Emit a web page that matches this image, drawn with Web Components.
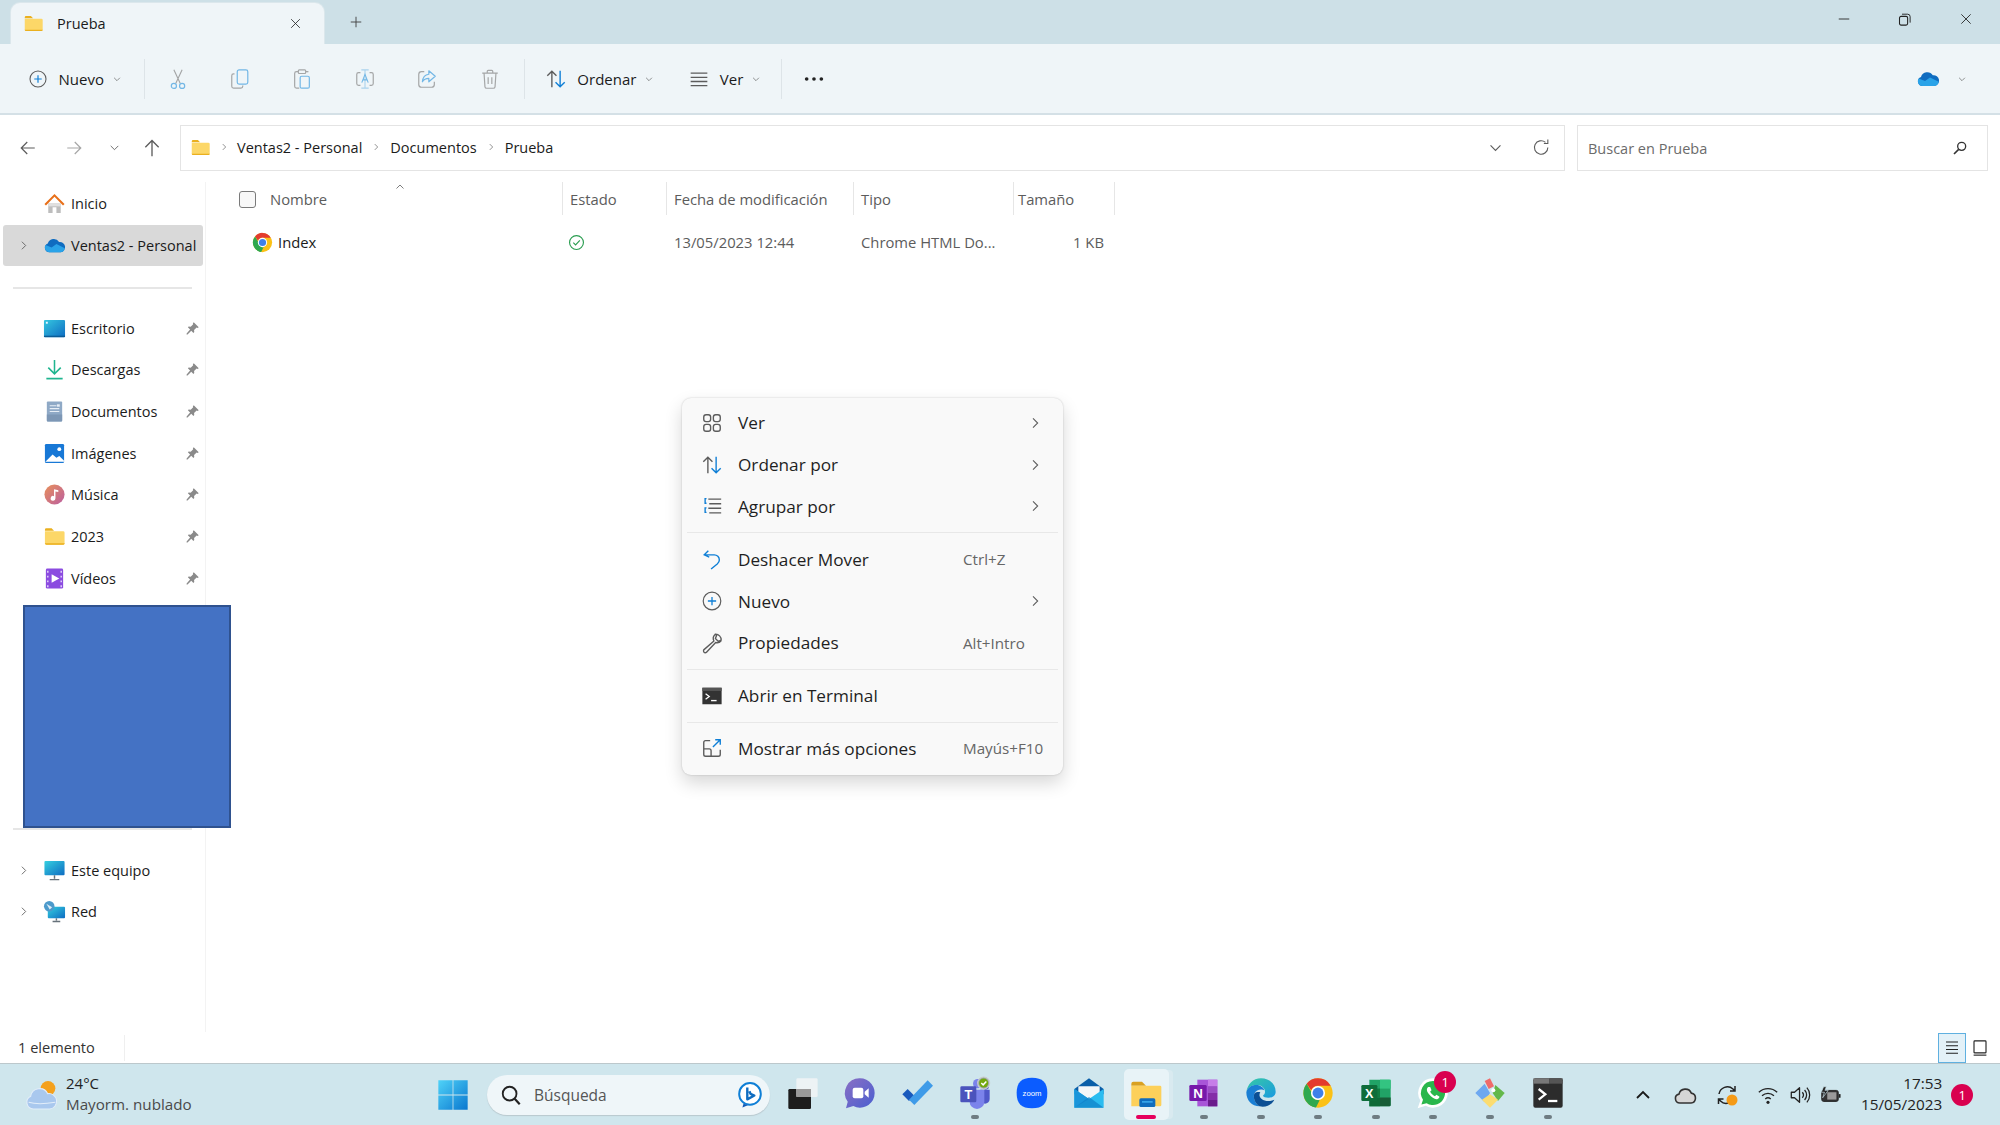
<!DOCTYPE html>
<html lang="es"><head><meta charset="utf-8"><title>Prueba</title>
<style>
html,body{margin:0;padding:0;height:100%;overflow:hidden;background:#fff;font-family:"Open Sans","Noto Sans",sans-serif;color:#1b1b1b}
</style></head><body>
<app-window>
  <win-titlebar></win-titlebar>
  <win-toolbar></win-toolbar>
  <address-row></address-row>
  <main-area>
    <nav-pane>
      <nav-item icon="home" style="margin-top:1px">Inicio</nav-item>
      <nav-item icon="onedrive" chevron selected>Ventas2 - Personal</nav-item>
      <nav-sep></nav-sep>
      <nav-item icon="desktop" pin>Escritorio</nav-item>
      <nav-item icon="download" pin>Descargas</nav-item>
      <nav-item icon="docs" pin>Documentos</nav-item>
      <nav-item icon="pictures" pin>Imágenes</nav-item>
      <nav-item icon="music" pin>Música</nav-item>
      <nav-item icon="folder" pin>2023</nav-item>
      <nav-item icon="videos" pin>Vídeos</nav-item>
      <nav-sep style="margin-top:229px;margin-bottom:19px"></nav-sep>
      <nav-item icon="pc" chevron>Este equipo</nav-item>
      <nav-item icon="network" chevron>Red</nav-item>
    </nav-pane>
    <file-list></file-list>
  </main-area>
  <status-bar></status-bar>
  <task-bar></task-bar>
  <redaction-box></redaction-box>
  <context-menu>
    <menu-item icon="grid" arrow>Ver</menu-item>
    <menu-item icon="sort" arrow>Ordenar por</menu-item>
    <menu-item icon="group" arrow>Agrupar por</menu-item>
    <menu-sep></menu-sep>
    <menu-item icon="undo" shortcut="Ctrl+Z">Deshacer Mover</menu-item>
    <menu-item icon="plus" arrow>Nuevo</menu-item>
    <menu-item icon="wrench" shortcut="Alt+Intro">Propiedades</menu-item>
    <menu-sep></menu-sep>
    <menu-item icon="term">Abrir en Terminal</menu-item>
    <menu-sep></menu-sep>
    <menu-item icon="more" shortcut="Mayús+F10">Mostrar más opciones</menu-item>
  </context-menu>
</app-window>
<script>
const G='#5c5c5c',B='#0f7fd6';
const ICONS={
plus:`<circle cx="12" cy="12" r="9.6" fill="none" stroke="${G}" stroke-width="1.3"/><path d="M12 7.5v9M7.5 12h9" stroke="${B}" stroke-width="1.4"/>`,
cut:`<path d="M7.5 2l7 15M16.5 2l-7 15" stroke="#8a8a8a" stroke-width="1.2" fill="none"/><circle cx="7.5" cy="19.5" r="2.8" fill="none" stroke="#4aa3e0" stroke-width="1.3"/><circle cx="16.5" cy="19.5" r="2.8" fill="none" stroke="#4aa3e0" stroke-width="1.3"/>`,
copy:`<path d="M6 6.5H5a2 2 0 0 0-2 2V20a2 2 0 0 0 2 2h8a2 2 0 0 0 2-2v-1" fill="none" stroke="#8c8c8c" stroke-width="1.3"/><rect x="9" y="2" width="11.5" height="15.5" rx="2" fill="none" stroke="#4aa3e0" stroke-width="1.3"/>`,
paste:`<path d="M8 4H6a2 2 0 0 0-2 2v14a2 2 0 0 0 2 2h3" fill="none" stroke="#8c8c8c" stroke-width="1.3"/><path d="M16 4h2a2 2 0 0 1 1 .4" fill="none" stroke="#8c8c8c" stroke-width="1.3"/><rect x="8" y="2" width="8" height="4" rx="1" fill="none" stroke="#8c8c8c" stroke-width="1.3"/><rect x="10" y="9" width="10" height="13" rx="1.6" fill="none" stroke="#4aa3e0" stroke-width="1.3"/>`,
rename:`<path d="M7 5H5a2 2 0 0 0-2 2v10a2 2 0 0 0 2 2h2M17 5h2a2 2 0 0 1 2 2v10a2 2 0 0 1-2 2h-2" fill="none" stroke="#8c8c8c" stroke-width="1.3"/><path d="M8 2h8M8 22h8M12 2v20" stroke="#4aa3e0" stroke-width="1.2" fill="none" opacity=".55"/><path d="M8.5 16L12 7l3.5 9M9.7 13h4.6" stroke="#4aa3e0" stroke-width="1.2" fill="none"/>`,
share:`<path d="M9 4H6a3 3 0 0 0-3 3v11a3 3 0 0 0 3 3h11a3 3 0 0 0 3-3v-3" fill="none" stroke="#8c8c8c" stroke-width="1.3"/><path d="M14 3l7 6-7 6v-3.6c-3.5 0-5.6 1.2-7 3.6 .4-4.6 2.8-7.8 7-8.2z" fill="none" stroke="#4aa3e0" stroke-width="1.3" stroke-linejoin="round"/>`,
trash:`<path d="M3.5 5.5h17M9 5.5V3.5a1 1 0 0 1 1-1h4a1 1 0 0 1 1 1v2M5.5 5.5l1 15a2 2 0 0 0 2 1.6h7a2 2 0 0 0 2-1.6l1-15M10 10v7.5M14 10v7.5" fill="none" stroke="#8c8c8c" stroke-width="1.3"/>`,
sort:`<path d="M7.5 21V3.5M2.5 8.5l5-5 5 5" fill="none" stroke="${G}" stroke-width="1.5"/><path d="M16.5 3v17.5M11.5 15.5l5 5 5-5" fill="none" stroke="${B}" stroke-width="1.5"/>`,
lines:`<path d="M2 5h20M2 10h20M2 15h20M2 20h20" stroke="${G}" stroke-width="1.6"/>`,
dots:`<circle cx="4" cy="12" r="2" fill="#222"/><circle cx="12" cy="12" r="2" fill="#222"/><circle cx="20" cy="12" r="2" fill="#222"/>`,
chevD:`<path d="M5 9l7 7 7-7" fill="none" stroke="${G}" stroke-width="1.6"/>`,
chevR:`<path d="M9 5l7 7-7 7" fill="none" stroke="${G}" stroke-width="1.6"/>`,
chevU:`<path d="M5 15l7-7 7 7" fill="none" stroke="${G}" stroke-width="1.6"/>`,
chevUd:`<path d="M4 16l8-8 8 8" fill="none" stroke="#1a1a1a" stroke-width="2.4"/>`,
back:`<path d="M21 12H3M11 4l-8 8 8 8" fill="none" stroke="${G}" stroke-width="1.6"/>`,
fwd:`<path d="M3 12h18M13 4l8 8-8 8" fill="none" stroke="#a6a6a6" stroke-width="1.6"/>`,
up:`<path d="M12 22V3M4 11l8-8 8 8" fill="none" stroke="${G}" stroke-width="1.6"/>`,
refresh:`<path d="M20 12a8.500 8.500 0 1 1-3-6.500M20 2v5h-5" fill="none" stroke="${G}" stroke-width="1.4"/>`,
search:`<circle cx="14.5" cy="9.5" r="6" fill="none" stroke="#333" stroke-width="2"/><path d="M10 14l-7 7" stroke="#333" stroke-width="2.4"/>`,
x:`<path d="M4 4l16 16M20 4L4 20" stroke="#222" stroke-width="1.5"/>`,
add:`<path d="M12 3v18M3 12h18" stroke="#444" stroke-width="1.6"/>`,
min:`<path d="M3 12h18" stroke="#222" stroke-width="1.5"/>`,
restore:`<rect x="4" y="7" width="13" height="14" rx="2.5" fill="none" stroke="#222" stroke-width="1.7"/><path d="M8 3.5h9a4 4 0 0 1 4 4V17" fill="none" stroke="#222" stroke-width="1.5"/>`,
folder:`<path d="M2 5a1.5 1.5 0 0 1 1.5-1.5h5.5L11.5 6H2z" fill="#eab01f"/><path d="M2 6.5h19a1.5 1.5 0 0 1 1.5 1.5v11a1.5 1.5 0 0 1-1.5 1.5H3.5A1.5 1.5 0 0 1 2 19z" fill="#fcd768"/><path d="M2 19h20.5v.5a1.5 1.5 0 0 1-1.5 1H3.5A1.5 1.5 0 0 1 2 19z" fill="#eab01f"/>`,
home:`<path d="M5.5 12h13v10h-4.5v-6h-4v6H5.500z" fill="#bdbdbd"/><path d="M5.500 12h13v3h-13z" fill="#e0e0e0"/><path d="M12 2L1.500 12.500l1.600 1.500L12 5l8.900 9 1.600-1.500z" fill="#e8701a"/>`,
onedrive:`<path d="M6.500 19A4.700 4.700 0 0 1 5 9.900 6.500 6.500 0 0 1 16.800 8.300 5.400 5.400 0 0 1 18.500 19z" fill="#0f6cc0"/><path d="M6.500 19a4.700 4.700 0 0 1-3.800-7.400L9 14l5-3.500 8.700 4.300A5 5 0 0 1 18.500 19z" fill="#2aa3e8"/>`,
desktop:`<rect x="1" y="3" width="22" height="18" rx="1.200" fill="url(#g1)"/><rect x="1" y="19.500" width="22" height="1.500" fill="#0b5c96"/><rect x="3" y="5" width="2" height="2" fill="#e8f8ff"/><defs><linearGradient id="g1" x1="0" y1="0" x2="1" y2="1"><stop offset="0" stop-color="#35c7e0"/><stop offset="1" stop-color="#0e6cc2"/></linearGradient></defs>`,
download:`<path d="M12 2v14M5.500 10l6.500 6.500 6.500-6.500" fill="none" stroke="#1fb58f" stroke-width="1.600"/><path d="M3.500 21.500h17" stroke="#1fb58f" stroke-width="1.800"/>`,
docs:`<rect x="4" y="1.500" width="16" height="21" rx="1" fill="#8fa9c6"/><path d="M4 15h16v6.500a1 1 0 0 1-1 1H5a1 1 0 0 1-1-1z" fill="#7d97b5"/><path d="M7 6h7M7 9h10M7 12h10" stroke="#e7eef6" stroke-width="1.200"/><rect x="14.500" y="4.500" width="3" height="2.500" fill="#e7eef6"/>`,
pictures:`<rect x="2" y="2" width="20" height="20" rx="1.500" fill="#1878d6"/><path d="M2 21l8-8 4 3.500 3-2 5 5v1H2z" fill="#fff"/><circle cx="17" cy="7.500" r="2" fill="#fff"/>`,
music:`<defs><linearGradient id="g2" x1="0" y1="0" x2="1" y2="1"><stop offset="0" stop-color="#e8905a"/><stop offset="1" stop-color="#bb5ea0"/></linearGradient></defs><circle cx="12" cy="12" r="10.500" fill="url(#g2)"/><path d="M11.500 6.500l4.500 1v2l-3-.6V16a2.500 2.500 0 1 1-1.500-2.300z" fill="#fff"/>`,
videos:`<rect x="3" y="1.500" width="18" height="21" rx="1.500" fill="#8b4be0"/><path d="M9 7.500l8 4.500-8 4.500z" fill="#fff"/><path d="M5 4v2M5 9v2M5 14v2M5 19v2M19 4v2M19 9v2M19 14v2M19 19v2" stroke="#e4d4fa" stroke-width="1.500"/>`,
pc:`<defs><linearGradient id="g3" x1="0" y1="0" x2="1" y2="1"><stop offset="0" stop-color="#35d0e0"/><stop offset="1" stop-color="#0e6cc2"/></linearGradient></defs><rect x="1.500" y="2" width="21" height="15" rx="1" fill="url(#g3)"/><path d="M12 17v3.500M7 21.500h10" stroke="#66717a" stroke-width="1.500"/>`,
network:`<defs><linearGradient id="g4" x1="0" y1="0" x2="1" y2="1"><stop offset="0" stop-color="#35d0e0"/><stop offset="1" stop-color="#0e6cc2"/></linearGradient></defs><rect x="5" y="7" width="18" height="12" rx="1" fill="url(#g4)"/><path d="M14 19v2.500M10 22.500h8" stroke="#66717a" stroke-width="1.500"/><circle cx="6.500" cy="6.500" r="5.500" fill="#4d9acb"/><path d="M3.500 4l6 3.500L7 10z" fill="#dcecf6"/>`,
pin:`<path d="M14 2l8 8-2 1-1.500-.5-4 4 .3 3.200-1.300 1.300-3.500-3.500L4 21.500l-1.500.1.100-1.500 5.500-6.500L4.600 10.100 5.900 8.800l3.200.3 4-4L12.600 3.500z" fill="#8a8a8a"/>`,
chrome:`<circle cx="12" cy="12" r="11" fill="#fbc116"/><path d="M12 1a11 11 0 0 1 9.500 5.500H12a5.500 5.500 0 0 0-5.100 3.500L3.500 5A11 11 0 0 1 12 1z" fill="#e33b2e"/><path d="M3.500 5l5 8.900 1.700 1.700-.2 7.200A11 11 0 0 1 3.500 5z" fill="#2fa84f"/><path d="M8 15l2.300 2 2.900.4-2.700 5.500a11 11 0 0 1-4.800-2z" fill="#2fa84f"/><circle cx="12" cy="12" r="5.300" fill="#fff"/><circle cx="12" cy="12" r="4.100" fill="#3f80ea"/>`,
ok:`<circle cx="12" cy="12" r="9.800" fill="none" stroke="#2a9d50" stroke-width="1.600"/><path d="M7.500 12.300l3.200 3.200 6-6.500" fill="none" stroke="#2a9d50" stroke-width="1.600"/>`,
grid:`<g fill="none" stroke="${G}" stroke-width="1.500"><rect x="3" y="3" width="7.500" height="7.500" rx="2.500"/><rect x="13.500" y="3" width="7.500" height="7.500" rx="2.500"/><rect x="3" y="13.500" width="7.500" height="7.500" rx="2.500"/><rect x="13.500" y="13.500" width="7.500" height="7.500" rx="2.500"/></g>`,
group:`<path d="M6 4H4.500v5H6M6 14H4.500v5H6" fill="none" stroke="${B}" stroke-width="1.500"/><path d="M8 4.500h14M9 9.500h13M8 14.500h14M9 19.500h13" stroke="${G}" stroke-width="1.500"/>`,
undo:`<path d="M8 3L3.500 7.500 9 10M3.500 7.500h11a5.500 5.500 0 0 1 5.500 5.500c0 2-1 3.300-2.300 4.500L11 23" fill="none" stroke="${B}" stroke-width="1.500"/>`,
wrench:`<path d="M15.500 2.500a6 6 0 0 1 6.500 6.500l-3.300 1.200-3-3 1.300-3.500zM15 3a6 6 0 0 0-.9 6.800L3 19.500a2.200 2.200 0 0 0 1.500 3.200 2.200 2.200 0 0 0 1.500-.7L16 11.500a6 6 0 0 0 6-2" fill="none" stroke="${G}" stroke-width="1.500" stroke-linejoin="round"/>`,
term:`<rect x="1.500" y="3" width="21" height="18" fill="#333"/><rect x="1.500" y="3" width="21" height="3.500" fill="#555"/><path d="M5 9.500l4 3-4 3" fill="none" stroke="#fff" stroke-width="1.400"/><path d="M11 17h6" stroke="#fff" stroke-width="1.500"/>`,
more:`<path d="M10 4H5a2 2 0 0 0-2 2v13a2 2 0 0 0 2 2h14a2 2 0 0 0 2-2v-5M3 13h6a2 2 0 0 1 2 2v6" fill="none" stroke="${G}" stroke-width="1.500"/><path d="M13 11l8-8M15.500 3H21v5.500" fill="none" stroke="${B}" stroke-width="1.500"/>`,
list:`<path d="M4 4h16M4 9h16M4 14h16M4 19h16" stroke="#222" stroke-width="1.500"/>`,
tile:`<rect x="4" y="2.500" width="16" height="16" rx="1" fill="none" stroke="#222" stroke-width="1.500"/><path d="M3.500 21.500h17" stroke="#222" stroke-width="1.500"/>`,
weather:`<circle cx="16.500" cy="7" r="5.500" fill="#f4a11e"/><path d="M5.500 22.500a5 5 0 0 1-2-9.500 6.800 6.800 0 0 1 12.800-2A5.800 5.800 0 0 1 18 22.500z" fill="#a9c8ee" stroke="#e2edf9" stroke-width=".8"/><path d="M2 17.500c5 1.500 11 1.500 20 0" fill="none" stroke="#e2edf9" stroke-width=".8"/>`,
start:`<defs><linearGradient id="s" x1="0" y1="0" x2="1" y2="1"><stop offset="0" stop-color="#4fd2f8"/><stop offset="1" stop-color="#0a77cf"/></linearGradient></defs><path d="M1 1h10.700v10.700H1zM12.300 1H23v10.700H12.300zM1 12.300h10.700V23H1zM12.300 12.300H23V23H12.300z" fill="url(#s)"/>`,
loupe:`<circle cx="10.500" cy="10.500" r="7.500" fill="none" stroke="#222" stroke-width="2"/><path d="M16 16l5.500 6" stroke="#222" stroke-width="2.400"/>`,
bing:`<circle cx="12" cy="11" r="10" fill="#fff" stroke="#0f7fd6" stroke-width="1.800"/><path d="M6 20l-1 3.500 5-2" fill="#1259b5"/><path d="M9.500 5v11l6.500-3.500-3.500-1.500-1-2.500" fill="none" stroke="#0f6cc0" stroke-width="2.200" stroke-linejoin="round"/>`,
squares:`<rect x="1" y="9" width="17" height="15" rx="1" fill="#1d1d1d"/><rect x="7" y="1" width="16" height="14" rx="1" fill="#f2f5f6" opacity=".85"/><rect x="7" y="9" width="11" height="6" fill="#9a9a9a"/>`,
meet:`<defs><linearGradient id="m" x1="0" y1="0" x2="1" y2="1"><stop offset="0" stop-color="#8a6fc4"/><stop offset="1" stop-color="#4a5fd0"/></linearGradient></defs><path d="M12 1a11 11 0 1 1-5 20.800L1.500 23.500l1.300-5A11 11 0 0 1 12 1z" fill="url(#m)"/><rect x="6.500" y="8" width="8" height="8" rx="1.500" fill="#fff"/><path d="M15.500 11l3-2.500v7l-3-2.500z" fill="#fff"/>`,
todo:`<path d="M1 13l4-4 5 5-4 4z" fill="#195abd"/><path d="M6 18L20 3.500l4 4L10 22z" fill="#3f9be8" transform="translate(0 -1)"/>`,
teams:`<circle cx="14" cy="5" r="3.500" fill="#7b83eb"/><circle cx="20" cy="7" r="2.500" fill="#5059c9"/><path d="M16 9.500h7v7a3.500 3.500 0 0 1-4 3.500z" fill="#5059c9"/><path d="M8 9.500h11v9a5.500 5.500 0 0 1-11 0z" fill="#7b83eb"/><rect x="1" y="7" width="12" height="12" rx="1" fill="#4b53bc"/><text x="7" y="16.500" font-family="Liberation Sans" font-weight="700" font-size="9.500" fill="#fff" text-anchor="middle">T</text><circle cx="18.500" cy="4.500" r="4.500" fill="#9aa" stroke="#ccc" stroke-width=".8"/><circle cx="18.500" cy="4.500" r="3.400" fill="#74a80e"/><path d="M16.700 4.500l1.400 1.400 2.400-2.600" fill="none" stroke="#fff" stroke-width="1.100"/>`,
zoom:`<path d="M12 .500C20 .500 23.500 4 23.500 12S20 23.500 12 23.500.5 20 .5 12 4 .5 12 .5z" fill="#0b5cff"/><text x="12" y="14" font-family="Liberation Sans" font-size="5.800" fill="#fff" text-anchor="middle">zoom</text>`,
mail:`<path d="M1 9l11-8 11 8v4H1z" fill="#0a5ea8"/><path d="M4 7h16v8l-8 4-8-4z" fill="#f3f6f8"/><path d="M1 9l11 7.500L23 9v14H1z" fill="#2bbcf0"/><path d="M1 23V9l11 7.500z" fill="#1a95da"/><path d="M1 23h22l-11-8z" fill="#0f7fc6" opacity=".7"/>`,
explorer:`<path d="M1 5a1.500 1.500 0 0 1 1.500-1.500H9l3 3H1z" fill="#d9a021"/><path d="M1 6.500h21.500a1 1 0 0 1 1 1V21a1 1 0 0 1-1 1H1z" fill="#fdd05a"/><rect x="7" y="16" width="12" height="6.500" rx="1.200" fill="#0f6cbd"/><rect x="9" y="18" width="8" height="1.300" fill="#35a3e8"/>`,
onenote:`<path d="M7 2h15v20H7z" fill="#a855d8"/><path d="M15 2h7v5h-7z" fill="#c67de8"/><path d="M15 7h7v5h-7z" fill="#9b4fc4"/><path d="M15 12h7v5h-7z" fill="#842ea8"/><path d="M15 17h7v5h-7z" fill="#6a1b8c"/><rect x="1" y="6" width="13" height="12" rx="1" fill="#7719aa"/><text x="7.500" y="15.600" font-family="Liberation Sans" font-weight="700" font-size="10" fill="#fff" text-anchor="middle">N</text>`,
edge:`<defs><linearGradient id="e" x1="0" y1="0" x2="1" y2="1"><stop offset="0" stop-color="#36c9a6"/><stop offset="1" stop-color="#1a9ae0"/></linearGradient></defs><path d="M12 1c6.500 0 11 4.500 11 10 0 3-2.500 4.500-5.500 4.500-2 0-4-.6-4-1.500 0-.5 1.500-.8 1.500-3 0-2.800-2.800-5-6-5C5 6 1.500 8 1 11.500 1.800 5.500 6 1 12 1z" fill="url(#e)"/><path d="M1 11.500c.5-3.500 4-5.500 7.500-5.500 3 0 5.600 2 5.900 4-1.500-1-6-1-7.400 2.500-1 2.500 0 7 4 9.500C5 22 1 17.500 1 11.500z" fill="#1a7fd4"/><path d="M7 12.500c-1 2.500 0 7 4 9.500 4.500 1 9-1 11-5-3 1.500-7 1.500-9.500-.5-2-1.500-2-3.500-1-5-2-.5-3.800 0-4.500 1z" fill="#0b4f94"/>`,
excel:`<path d="M7 2h15a1 1 0 0 1 1 1v18a1 1 0 0 1-1 1H7z" fill="#21a366"/><path d="M15 2h8v6.700h-8z" fill="#33c481"/><path d="M7 8.700h8v6.600H7z" fill="#107c41"/><path d="M15 15.300h8V21a1 1 0 0 1-1 1h-7z" fill="#185c37"/><path d="M7 15.300h8V22H7z" fill="#0e6a38"/><rect x="1" y="6" width="12" height="12" rx="1" fill="#0e6d3a"/><text x="7" y="15.500" font-family="Liberation Sans" font-weight="700" font-size="9.500" fill="#fff" text-anchor="middle">X</text>`,
whatsapp:`<path d="M12 1a11 11 0 1 1-5.500 20.500L.5 23.500l2-5.800A11 11 0 0 1 12 1z" fill="#fff"/><path d="M12 3a9 9 0 1 1-4.800 16.600L3.300 20.700l1.200-3.700A9 9 0 0 1 12 3z" fill="#29b74c"/><path d="M8.500 7.500c-1.500 1-1.500 3 .5 5.500s4.500 4 6.200 3.600c1.300-.4 1.800-1.500 1.500-2l-2.200-1.200-1 1c-1.300-.3-3.200-2.200-3.600-3.500l1-1-1-2.400z" fill="#fff"/>`,
git:`<path d="M8 3l4-2 3 6-4 2z" fill="#f06a6a"/><path d="M1 12l7-7 4 7-4 7z" fill="#6ea8f0"/><path d="M16 6l7 6-5 6-4-6z" fill="#63b84a"/><path d="M6 17l6-4 6 4-6 6z" fill="#fbdc70"/><circle cx="14.500" cy="10" r="1.500" fill="#fff"/>`,
termapp:`<rect x="1" y="1" width="22" height="22" rx="1.500" fill="#2c2c2c"/><rect x="1" y="1" width="12" height="4" fill="#777"/><rect x="13" y="1" width="10" height="4" fill="#555"/><path d="M5 9l5 4-5 4" fill="none" stroke="#fff" stroke-width="1.700"/><path d="M12 18h7" stroke="#fff" stroke-width="1.700"/>`,
cloud2:`<path d="M7 20a4.500 4.500 0 0 1-1-8.900 6.500 6.500 0 0 1 12.300-1A5 5 0 0 1 18 20z" fill="#d6d6d6" stroke="#333" stroke-width="1.600"/>`,
sync:`<path d="M4 11a8.500 8.500 0 0 1 14-5l2 2M20 3v5h-5M19 14a8 8 0 0 1-13.500 4l-2-2M3.500 21v-5h5" fill="none" stroke="#222" stroke-width="1.500"/><circle cx="17" cy="17" r="5.500" fill="#f59a16"/>`,
wifi:`<path d="M2 9a14.500 14.500 0 0 1 20 0M5.500 12.800a9.500 9.500 0 0 1 13 0M9 16.300a4.500 4.500 0 0 1 6 0" fill="none" stroke="#222" stroke-width="1.500"/><circle cx="12" cy="20" r="1.700" fill="#222"/>`,
vol:`<path d="M2.500 9v6h3.500l5.500 5V4L6 9z" fill="none" stroke="#222" stroke-width="1.400" stroke-linejoin="round"/><path d="M14.500 9a4.500 4.500 0 0 1 0 6M17 6.500a8 8 0 0 1 0 11M19.500 4a12 12 0 0 1 0 16" fill="none" stroke="#222" stroke-width="1.400"/>`,
battery:`<rect x="3" y="7" width="18" height="12" rx="2" fill="#333" stroke="#222"/><rect x="21.500" y="11" width="2" height="4" fill="#222"/><rect x="9" y="9" width="10" height="8" fill="#9a9a9a"/><path d="M5 3L2.500 9H6l-2 6 6-8H6.500L8 3z" fill="#222" stroke="#cfe7ef" stroke-width=".7"/>`
};
function def(name,css,html,extra){
  const t=document.createElement('template');
  t.innerHTML=`<style>${css}</style>${html}`;
  customElements.define(name,class extends HTMLElement{
    constructor(){super();this.attachShadow({mode:'open'}).appendChild(t.content.cloneNode(true));}
    connectedCallback(){if(extra&&!this._d){this._d=1;extra.call(this,this.shadowRoot);}}
  });
}
def('x-icon',':host{display:inline-flex;flex:none;width:20px;height:20px}svg{width:100%;height:100%;display:block;overflow:visible}','<svg viewBox="0 0 24 24"></svg>',function(r){
  r.querySelector('svg').innerHTML=ICONS[this.getAttribute('name')]||'';
  const s=this.getAttribute('size');if(s){this.style.width=s+'px';this.style.height=s+'px';}
});
function setIcon(el,name,size){el.shadowRoot.querySelector('svg').innerHTML=ICONS[name]||'';if(size){el.style.width=el.style.height=size+'px';}}
def('app-window',':host{display:flex;flex-direction:column;position:relative;width:2000px;height:1125px;overflow:hidden}','<slot></slot>');

def('win-titlebar',`:host{display:flex;height:44px;background:#cde0e7;flex:none;align-items:flex-end;font-size:14.500px}
.tab{width:313px;height:41px;margin-left:11px;background:#eff5f8;border-radius:9px 9px 0 0;display:flex;align-items:center;box-shadow:0 0 0 1px #dbe7ec}
.tab x-icon{margin-left:12px}.tab span{margin-left:13px;flex:1}.tab .c{margin-right:22px}
.plus{margin:0 0 15px 25px}.ctl{margin-left:auto;display:flex;align-self:center;align-items:center;margin-bottom:6px}
.ctl x-icon:nth-child(1){margin-right:46px}.ctl x-icon:nth-child(2){margin-right:47px}.ctl x-icon:nth-child(3){margin-right:27px}`,
`<div class="tab"><x-icon name="folder" size="21"></x-icon><span>Prueba</span><x-icon class="c" name="x" size="13"></x-icon></div>
<x-icon class="plus" name="add" size="14"></x-icon>
<div class="ctl"><x-icon name="min" size="14"></x-icon><x-icon name="restore" size="15"></x-icon><x-icon name="x" size="14"></x-icon></div>`);

def('tool-button',`:host{display:flex;align-items:center;flex:none;font-size:15px;color:#1b1b1b}
.i{display:flex}.l{margin-left:10.500px}.c{margin-left:8px;display:flex}`,
`<span class="i"></span><span class="l"><slot></slot></span><span class="c"><x-icon name="chevD" size="10"></x-icon></span>`,function(r){
  const n=this.getAttribute('icon'),sz=this.getAttribute('size')||20;
  r.querySelector('.i').innerHTML=`<x-icon name="${n}" size="${sz}"></x-icon>`;
  if(!this.textContent.trim()){r.querySelector('.l').remove();r.querySelector('.c').remove();this.style.justifyContent='center';}
});
def('v-sep',':host{display:block;width:1px;height:40px;background:#dde4e8;flex:none}','');
def('win-toolbar',`:host{display:flex;height:69px;flex:none;background:#eff5f8;border-bottom:2px solid #d4e0e6;align-items:center}
.dis tool-button{width:62.400px}.dis{display:flex;opacity:.75;margin-left:1.500px}`,
`<tool-button icon="plus" style="margin-left:28px;width:116px">Nuevo</tool-button>
<v-sep></v-sep>
<div class="dis">
<tool-button icon="cut" size="22"></tool-button><tool-button icon="copy" size="22"></tool-button><tool-button icon="paste" size="22"></tool-button><tool-button icon="rename" size="22"></tool-button><tool-button icon="share" size="22"></tool-button><tool-button icon="trash" size="22"></tool-button>
</div>
<v-sep style="margin-left:3.500px"></v-sep>
<tool-button icon="sort" size="22" style="margin-left:19.500px;width:144.500px">Ordenar</tool-button>
<tool-button icon="lines" size="20" style="width:92px">Ver</tool-button>
<v-sep></v-sep>
<tool-button icon="dots" size="22" style="margin-left:21px"></tool-button>
<tool-button icon="onedrive" size="24" style="margin-left:auto;margin-right:17px"></tool-button>
<x-icon name="chevD" size="10" style="margin-right:33px"></x-icon>`);

def('address-row',`:host{display:flex;height:67px;flex:none;align-items:flex-start;padding-top:10px;box-sizing:border-box;font-size:14.500px}
.nav{display:flex;width:180px;height:45px;align-items:center}
.bar{display:flex;align-items:center;box-sizing:border-box;width:1385px;height:46px;background:#fff;border:1.500px solid #e4e4e4;padding-bottom:2px}
.s{display:flex;align-items:center;box-sizing:border-box;margin-left:12px;width:411px;height:46px;border:1.500px solid #e4e4e4;padding:0 19px 0 10px;color:#6b6b6b;justify-content:space-between;font-size:14.500px}`,
`<div class="nav"><x-icon name="back" size="18" style="margin-left:19px"></x-icon><x-icon name="fwd" size="18" style="margin-left:28px"></x-icon><x-icon name="chevD" size="13" style="margin-left:25px"></x-icon><x-icon name="up" size="20" style="margin-left:21px"></x-icon></div>
<div class="bar"><x-icon name="folder" size="21" style="margin-left:9px"></x-icon><x-icon name="chevR" size="10" style="margin:0 8px"></x-icon><span>Ventas2 - Personal</span><x-icon name="chevR" size="10" style="margin:0 9px"></x-icon><span>Documentos</span><x-icon name="chevR" size="10" style="margin:0 9px"></x-icon><span>Prueba</span>
<x-icon name="chevD" size="17" style="margin-left:auto"></x-icon><x-icon name="refresh" size="19" style="margin:0 13px 0 28px"></x-icon></div>
<div class="s"><span>Buscar en Prueba</span><x-icon name="search" size="16"></x-icon></div>`);

def('main-area',':host{display:flex;flex:1;min-height:0}','<slot></slot>');
def('nav-pane',':host{display:block;width:205px;flex:none;border-right:1px solid #f3f3f3;box-sizing:content-box}','<slot></slot>');
def('nav-sep',':host{display:block;height:2px;width:179px;margin-left:13px;background:#e6e6e6;margin-top:21px;margin-bottom:18px}','');
def('nav-item',`:host{display:flex;align-items:center;height:41.700px;font-size:14.500px;color:#1b1b1b;margin:0 2px 0 3px;border-radius:3px;position:relative}
:host([selected]){background:#d9d9d9}
.ch{position:absolute;left:14px;display:none}.ic{margin-left:40px;margin-right:5px}
.pin{position:absolute;right:3px;display:none}.w{white-space:nowrap}`,
`<x-icon class="ch" name="chevR" size="13"></x-icon><x-icon class="ic"></x-icon><span class="w"><slot></slot></span><x-icon class="pin" name="pin" size="15"></x-icon>`,function(r){
  setIcon(r.querySelector('.ic'),this.getAttribute('icon'),23);
  if(this.hasAttribute('chevron'))r.querySelector('.ch').style.display='block';
  if(this.hasAttribute('pin'))r.querySelector('.pin').style.display='block';
});
def('file-list',`:host{display:block;flex:1;font-size:14.800px;color:#5c5c5c}
.h,.r{display:grid;grid-template-columns:356px 104px 187px 160px 102px;width:909px}
.h{height:33px;align-items:stretch;margin-bottom:6px}
.h>div{display:flex;align-items:center;padding-left:7px;padding-top:1px;box-sizing:border-box;border-left:1px solid #e6e6e6;position:relative}
.h>div:first-child{border-left:0;padding-left:33px}
.h>div:last-child{border-right:1px solid #e6e6e6;padding-left:4px}
.cb{width:15px;height:15px;border:1.500px solid #7a7a7a;border-radius:3px;background:#f8f8f8;margin-right:14px;flex:none}
.caret{position:absolute;left:188px;top:-1px}
.r{height:42px;align-items:center}.r>div{padding-left:7px;white-space:nowrap}
.r>div:first-child{padding-left:46px;display:flex;align-items:center;color:#1b1b1b}
.r>div:nth-child(2){padding-left:6px}
.r>div:nth-child(3){padding-left:8px}.r>div:nth-child(4){padding-left:8px}
.r>div:first-child span{margin-left:5px}.r>div:last-child{padding:0 11px 0 0;text-align:right}`,
`<div class="h"><div><span class="cb"></span>Nombre<x-icon class="caret" name="chevU" size="12"></x-icon></div><div>Estado</div><div>Fecha de modificación</div><div>Tipo</div><div>Tamaño</div></div>
<div class="r"><div><x-icon name="chrome" size="21"></x-icon><span>Index</span></div><div><x-icon name="ok" size="17" style="display:block"></x-icon></div><div>13/05/2023 12:44</div><div>Chrome HTML Do...</div><div>1 KB</div></div>`);
def('status-bar',`:host{display:flex;height:31px;flex:none;align-items:center;font-size:14.600px;color:#333}
.t{margin-left:18px;width:106px;border-right:1px solid #efefef;height:26px;line-height:24px}
.b{margin-left:auto;width:26px;height:28px;border:1.500px solid #5fb0e0;background:#e3f1f8;display:flex;align-items:center;justify-content:center}
.v{margin:0 11px 0 5px}`,
`<div class="t">1 elemento</div><div class="b"><x-icon name="list" size="18"></x-icon></div><x-icon class="v" name="tile" size="18"></x-icon>`);

def('task-icon',`:host{display:flex;flex:none;width:57.300px;height:62px;align-items:center;justify-content:center;position:relative;padding-bottom:4px;box-sizing:border-box}
:host([active])::before{content:"";position:absolute;left:6px;top:5px;width:45px;height:51px;background:#e8f3f7;border-radius:5px;box-shadow:5px 0 0 -1px #d9eaf0}
x-icon{position:relative}
.dot{position:absolute;left:50%;transform:translateX(-50%);bottom:7px;width:8px;height:4px;border-radius:2px;background:#6e7c82;display:none}
:host([active]) .dot{display:block;width:20px;background:#e6005c;bottom:7px}
:host([dot]) .dot{display:block}
.bd{position:absolute;left:30px;top:7px;width:22px;height:22px;border-radius:50%;background:#d9004f;color:#fff;font-size:13px;display:none;align-items:center;justify-content:center}`,
`<x-icon></x-icon><span class="dot"></span><span class="bd">1</span>`,function(r){
  setIcon(r.querySelector('x-icon'),this.getAttribute('name'),32);
  if(this.hasAttribute('badge'))r.querySelector('.bd').style.display='flex';
});
def('task-bar',`:host{display:flex;height:62px;flex:none;box-sizing:border-box;background:#cfe6ed;border-top:1.500px solid #bcc8cc;align-items:center;font-size:15px;color:#222;position:relative}
.w{display:flex;margin-left:26px;width:411px;align-items:center}
.w div{margin-left:8px;line-height:20.500px;margin-top:-2px}.w small{font-size:15.200px;color:#4a4a4a;display:block}
.p{display:flex;align-items:center;width:283px;height:40px;background:#eff6f9;border-radius:20px;box-shadow:0 1px 1px #b8c8ce;color:#555;font-size:15.500px;box-sizing:border-box;margin-right:4px}
.p span{margin-left:12px;flex:1}
.apps{display:flex}
.tr{display:flex;align-items:center;margin-left:58px}
.ck{margin-left:2px;text-align:right;line-height:21px;width:99px;font-size:15.300px;margin-top:-2px}
.nb{margin-left:9px;width:22px;height:22px;border-radius:50%;background:#d9004f;color:#fff;font-size:13px;display:flex;align-items:center;justify-content:center}`,
`<div class="w"><x-icon name="weather" size="32"></x-icon><div>24°C<small>Mayorm. nublado</small></div></div>
<x-icon name="start" size="32"></x-icon>
<div class="p" style="margin-left:18px"><x-icon name="loupe" size="22" style="margin-left:13px"></x-icon><span>Búsqueda</span><x-icon name="bing" size="26" style="margin-right:7px"></x-icon></div>
<div class="apps"><task-icon name="squares"></task-icon><task-icon name="meet"></task-icon><task-icon name="todo"></task-icon><task-icon name="teams" dot></task-icon><task-icon name="zoom"></task-icon><task-icon name="mail"></task-icon><task-icon name="explorer" active></task-icon><task-icon name="onenote" dot></task-icon><task-icon name="edge" dot></task-icon><task-icon name="chrome" dot></task-icon><task-icon name="excel" dot></task-icon><task-icon name="whatsapp" dot badge></task-icon><task-icon name="git" dot></task-icon><task-icon name="termapp" dot></task-icon></div>
<div class="tr"><x-icon name="chevUd" size="18"></x-icon><x-icon name="cloud2" size="24" style="margin-left:21px"></x-icon><x-icon name="sync" size="24" style="margin-left:18px"></x-icon><x-icon name="wifi" size="22" style="margin-left:18px"></x-icon><x-icon name="vol" size="22" style="margin-left:10px"></x-icon><x-icon name="battery" size="22" style="margin-left:8px"></x-icon></div>
<div class="ck">17:53<br>15/05/2023</div><div class="nb">1</div>`);

def('redaction-box',':host{position:absolute;left:23px;top:605px;width:208px;height:223px;box-sizing:border-box;background:#4472c4;border:2px solid #2f528f}','');
def('context-menu',`:host{position:absolute;left:682px;top:398px;width:381px;height:377px;box-sizing:border-box;background:#f9f9f9;border-radius:9px;box-shadow:0 8px 18px rgba(0,0,0,.16),0 0 2px rgba(0,0,0,.2);padding:4px 5px 3px;display:block}`,'<slot></slot>');
def('menu-sep',':host{display:block;height:1px;background:#e8e8e8;margin:5px 0}','');
def('menu-item',`:host{display:flex;align-items:center;height:41.800px;font-size:17.200px;color:#1f1f1f;position:relative}
x-icon.ic{margin-left:14px;margin-right:15px}
.s{position:absolute;left:276px;font-size:15.200px;color:#666;white-space:nowrap}
.a{position:absolute;left:340px;display:none}`,
`<x-icon class="ic"></x-icon><span><slot></slot></span><span class="s"></span><x-icon class="a" name="chevR" size="16"></x-icon>`,function(r){
  setIcon(r.querySelector('.ic'),this.getAttribute('icon'),22);
  r.querySelector('.s').textContent=this.getAttribute('shortcut')||'';
  if(this.hasAttribute('arrow'))r.querySelector('.a').style.display='block';
});
</script>
</body></html>
